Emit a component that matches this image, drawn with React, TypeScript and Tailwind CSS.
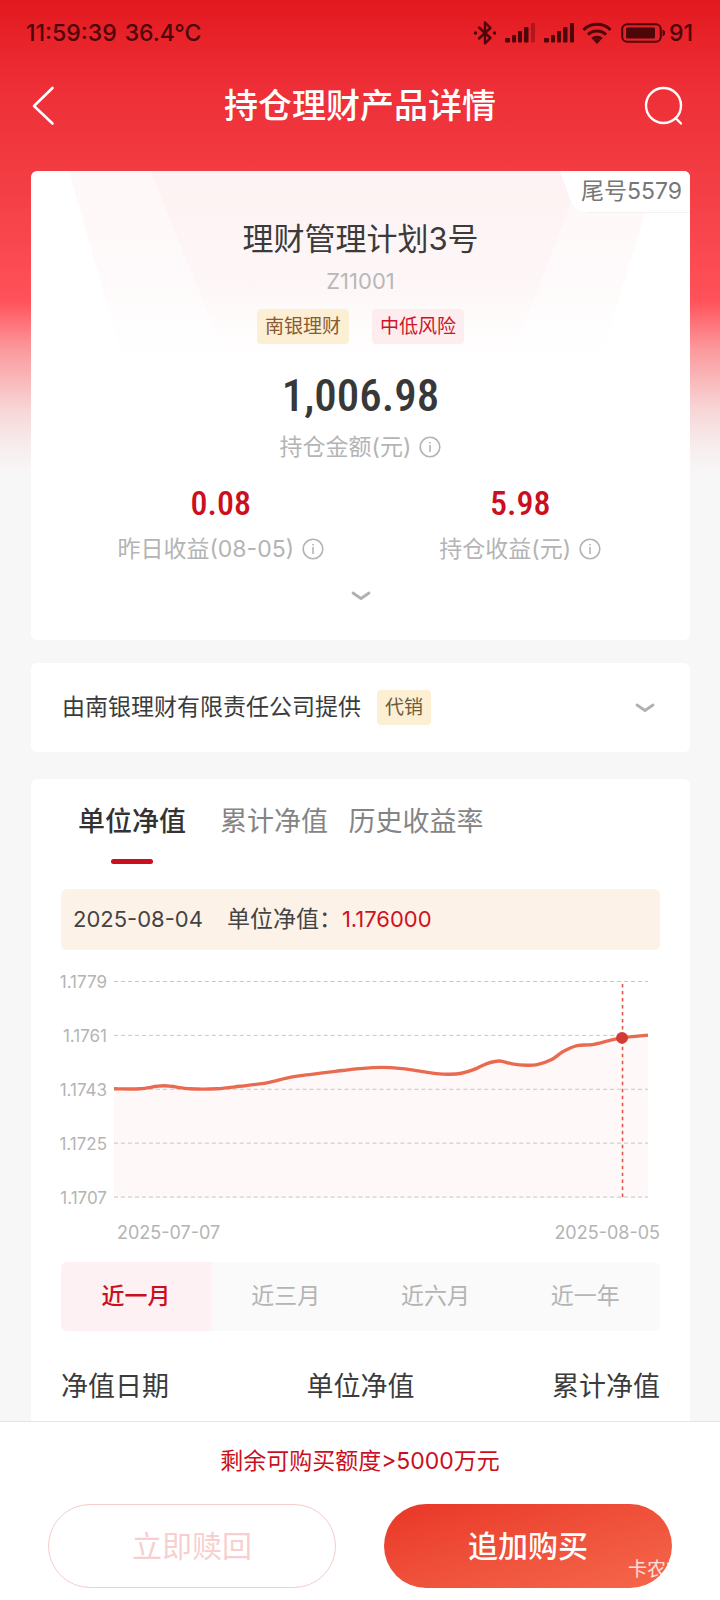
import { useState } from 'react';

const tabs = ['单位净值', '累计净值', '历史收益率'];
const periods = ['近一月', '近三月', '近六月', '近一年'];
const axisLabels = ['1.1779', '1.1761', '1.1743', '1.1725', '1.1707'];
const gridLines = [1, 55, 109, 163, 217];

// x / y of the net value curve inside the 536 x 218 plot
const points = [
  [0, 108], [26, 108], [50, 105], [76, 108], [103, 108], [126, 105.5], [153, 102],
  [176, 96.5], [196, 93.8], [222, 90.5], [246, 87.8], [268, 86.5], [289, 87.8], [309, 90.8],
  [323, 92.8], [336, 93.4], [348, 92.4], [361, 88.5], [373, 83], [386, 80.2], [399, 83],
  [413, 84.4], [424, 83.8], [438, 79], [450, 70.7], [464, 64.8], [479, 63.8], [496, 59.8],
  [509, 57], [535, 54.2],
];

function smoothPath(pts: number[][]) {
  let d = `M${pts[0][0]} ${pts[0][1]}`;
  for (let i = 0; i < pts.length - 1; i++) {
    const p0 = pts[i - 1] || pts[i];
    const p1 = pts[i];
    const p2 = pts[i + 1];
    const p3 = pts[i + 2] || p2;
    d += ` C${p1[0] + (p2[0] - p0[0]) / 6} ${p1[1] + (p2[1] - p0[1]) / 6}`;
    d += ` ${p2[0] - (p3[0] - p1[0]) / 6} ${p2[1] - (p3[1] - p1[1]) / 6} ${p2[0]} ${p2[1]}`;
  }
  return d;
}

function SignalIcon({ weak }: { weak?: boolean }) {
  return (
    <svg width="31" height="20" viewBox="0 0 31 20" fill="currentColor">
      <rect x="0" y="15" width="5" height="4.500" rx="1" />
      <rect x="7" y="12" width="4" height="7.500" rx="1" />
      <rect x="13" y="8" width="4" height="11.500" rx="1" />
      <rect x="19" y="4" width="4.500" height="15.500" rx="1" />
      <rect x="26" y="0" width="4" height="19.500" rx="1" opacity={weak ? 0.35 : 1} />
    </svg>
  );
}

function StatusBar() {
  return (
    <div className="flex h-[66px] items-center justify-between pl-[26px] pr-[27px] text-[#4d060a]">
      <div className="flex gap-2 text-[23px] font-medium">
        <span>11:59:39</span>
        <span>36.4°C</span>
      </div>
      <div className="flex items-center">
        <svg width="24" height="26" viewBox="0 0 24 26" fill="none" stroke="currentColor" strokeWidth="2.400" strokeLinejoin="round" strokeLinecap="round">
          <path d="M6 7.500 17.500 18 12 23.500V2.500L17.500 8 6 18.500" />
          <circle cx="2.500" cy="13" r="1" fill="currentColor" strokeWidth="1.400" />
          <circle cx="21.500" cy="13" r="1" fill="currentColor" strokeWidth="1.400" />
        </svg>
        <div className="ml-2 flex gap-2">
          <SignalIcon weak />
          <SignalIcon />
        </div>
        <svg className="ml-[7px]" width="30" height="22" viewBox="0 0 30 22" fill="none" stroke="currentColor" strokeWidth="3">
          <path d="M1.500 7.800a19.500 19.500 0 0 1 27 0" />
          <path d="M6 12.700a13 13 0 0 1 18 0" />
          <path d="M10.300 17a7 7 0 0 1 9.400 0" />
          <path d="M11.500 18.200 15 22l3.500-3.800a5.500 5.500 0 0 0-7 0z" fill="currentColor" stroke="none" />
        </svg>
        <svg className="ml-[9px]" width="45" height="20" viewBox="0 0 45 20" fill="none">
          <rect x="1.200" y="1.200" width="38.600" height="17.600" rx="5" stroke="currentColor" strokeWidth="2" />
          <rect x="5" y="4.500" width="29" height="11" rx="1.500" fill="currentColor" />
          <path d="M42 7c2 .5 2 5.500 0 6z" fill="currentColor" stroke="currentColor" />
        </svg>
        <span className="ml-[3px] text-[23px] font-medium">91</span>
      </div>
    </div>
  );
}

function InfoButton({ label }: { label: string }) {
  return (
    <button type="button" aria-label={label}>
      <svg width="22" height="22" viewBox="0 0 22 22" fill="none" stroke="#b4b4b4" strokeWidth="1.600">
        <circle cx="11" cy="11" r="9.800" />
        <path d="M11 9v7M11 6v1.600" />
      </svg>
    </button>
  );
}

function Chevron() {
  return (
    <svg width="20" height="10" viewBox="0 0 20 10" fill="none" stroke="#b0b0b0" strokeWidth="2.800" strokeLinecap="round" strokeLinejoin="round">
      <path d="M2 2l8 5.500L18 2" />
    </svg>
  );
}

function SummaryCard() {
  return (
    <section className="relative overflow-hidden rounded-md bg-white px-[30px] pt-[45px] text-center">
      <svg className="absolute left-0 top-0 h-[190px] w-full" viewBox="0 0 658 190" preserveAspectRatio="none">
        <defs>
          <linearGradient id="fade" x1="0" y1="0" x2="0" y2="1">
            <stop offset="0" stopColor="#fce6e8" stopOpacity="0.3" />
            <stop offset="0.600" stopColor="#fce6e8" stopOpacity="0.2" />
            <stop offset="1" stopColor="#fdeeee" stopOpacity="0" />
          </linearGradient>
        </defs>
        <path d="M38 0H626L568 190H92z" fill="url(#fade)" />
        <path d="M119 0H552L478 190H196z" fill="url(#fade)" />
      </svg>
      <div className="absolute right-0 top-0 h-[41px]">
        <svg className="absolute right-0 top-0" width="130" height="42" viewBox="0 0 130 42">
          <path d="M0 0H130V41H26C16 41 12 34 9 25z" fill="#fff" />
          <path d="M26 41.500H130" stroke="#f5f1f1" />
        </svg>
        <span className="relative pr-2 text-[23px] leading-[41px] text-[#777]">尾号5579</span>
      </div>

      <div className="relative">
        <h2 className="text-[31px] leading-[46px] text-[#3b3b3b]">理财管理计划3号</h2>
        <p className="text-[22px] leading-[38px] text-[#b8b8b8]">Z11001</p>
        <div className="mt-[9px] flex justify-center gap-[23px] text-[19px] leading-[35px]">
          <span className="rounded-sm bg-[#fdefd3] px-2 text-[#8a5a34]">南银理财</span>
          <span className="rounded-sm bg-[#fdedef] px-2 text-[#cb1526]">中低风险</span>
        </div>
        <p className="mt-[27px] font-['Roboto_Condensed','Roboto',sans-serif] text-[45px] font-medium leading-[50px] text-[#383838]">
          1,006.98
        </p>
        <div className="mt-[9px] flex items-center justify-center gap-2 text-[23px] leading-[34px] text-[#b4b4b4]">
          <span>持仓金额(元)</span>
          <InfoButton label="持仓金额说明" />
        </div>
        <div className="-mr-[10px] ml-[10px] mt-[19px] grid grid-cols-2 text-[23px] text-[#b4b4b4]">
          <div>
            <p className="font-['Roboto_Condensed','Roboto',sans-serif] text-[34px] font-medium leading-[40px] text-[#cb0f20]">0.08</p>
            <div className="mt-[9px] flex items-center justify-center gap-2 leading-[34px]">
              <span>昨日收益(08-05)</span>
              <InfoButton label="昨日收益说明" />
            </div>
          </div>
          <div>
            <p className="font-['Roboto_Condensed','Roboto',sans-serif] text-[34px] font-medium leading-[40px] text-[#cb0f20]">5.98</p>
            <div className="mt-[9px] flex items-center justify-center gap-2 leading-[34px]">
              <span>持仓收益(元)</span>
              <InfoButton label="持仓收益说明" />
            </div>
          </div>
        </div>
        <button type="button" aria-label="展开" className="mx-auto flex h-[74px] items-start justify-center pt-[25px]">
          <Chevron />
        </button>
      </div>
    </section>
  );
}

function ValueChart() {
  const line = smoothPath(points);
  return (
    <div className="mt-[23px]">
      <div className="flex gap-[7px] pr-[11px]">
        <div className="-ml-[3px] flex w-[49px] flex-col justify-between text-right text-[17px] leading-[18px] text-[#b4b4b4]">
          {axisLabels.map((label) => (
            <span key={label}>{label}</span>
          ))}
        </div>
        <div className="flex-1 py-2">
          <svg className="w-full" viewBox="0 0 536 218" fill="none">
            <path d={`${line} V217 H0 z`} fill="#fef8f8" />
            {gridLines.map((y) => (
              <path key={y} d={`M0 ${y - 0.5}H535`} stroke="#c9c6c6" strokeDasharray="4 3" />
            ))}
            <path d={line} stroke="#ea6a50" strokeWidth="3.400" />
            <path d="M509.500 3V217" stroke="#dd5a4a" strokeWidth="1.600" strokeDasharray="3.500 3.500" />
            <circle cx="509" cy="57" r="6" fill="#d23c35" />
          </svg>
        </div>
      </div>
      <div className="mt-3 flex justify-between pl-[56px] text-[18px] leading-[28px] text-[#b4b4b4]">
        <span>2025-07-07</span>
        <span>2025-08-05</span>
      </div>
    </div>
  );
}

export default function App() {
  const [activeTab, setActiveTab] = useState(0);
  const [period, setPeriod] = useState(0);

  return (
    <div className="flex min-h-screen flex-col bg-[#f7f7f7] bg-[linear-gradient(180deg,#e3191f_0px,#ee2f37_90px,#f43e45_190px,#ff5159_300px,#fb9a9d_350px,#f7d6d7_410px,#f7efef_450px,#f7f7f7_475px)] font-['Inter','Noto_Sans_CJK_SC',sans-serif]">
      <StatusBar />

      <header className="flex h-[80px] items-center justify-between pl-[31px] pr-[36px]">
        <button type="button" aria-label="返回" className="w-[45px]">
          <svg width="24" height="40" viewBox="0 0 24 40" fill="none" stroke="#fff" strokeWidth="2.600" strokeLinecap="round" strokeLinejoin="round">
            <path d="M21.500 2 3 20l18.500 17.500" />
          </svg>
        </button>
        <h1 className="text-[34px] font-medium leading-[50px] text-white">持仓理财产品详情</h1>
        <button type="button" aria-label="搜索" className="flex w-10 justify-center">
          <svg width="40" height="40" viewBox="0 0 40 40" fill="none" stroke="#fff" strokeWidth="2.400" strokeLinecap="round">
            <circle cx="19.500" cy="19.500" r="17.500" />
            <path d="M31.500 32 37 37.500" />
          </svg>
        </button>
      </header>

      <main className="flex flex-1 flex-col pl-[31px] pr-[30px] pt-[25px]">
        <SummaryCard />

        <section className="mt-[23px] flex h-[89px] items-center rounded-md bg-white px-[31px]">
          <span className="text-[23px] text-[#3b3b3b]">由南银理财有限责任公司提供</span>
          <span className="ml-4 rounded-sm bg-[#fdefd3] px-2 text-[19px] leading-[35px] text-[#6b5a3c]">代销</span>
          <button type="button" aria-label="展开机构信息" className="ml-auto pr-1">
            <Chevron />
          </button>
        </section>

        <section className="mt-[27px] flex-1 rounded-t-md bg-white px-[30px] pb-2 pt-[23px]">
          <div className="flex">
            {tabs.map((tab, i) => (
              <button
                key={tab}
                type="button"
                onClick={() => setActiveTab(i)}
                className={`flex w-[142px] flex-col items-center whitespace-nowrap text-[27px] leading-[40px] ${
                  activeTab === i ? 'font-medium text-[#333]' : 'text-[#848484]'
                }`}
              >
                {tab}
                {activeTab === i && <span className="mt-[17px] h-[5px] w-[42px] rounded-full bg-[#cb0f20]" />}
              </button>
            ))}
          </div>

          <div className="mt-[25px] flex h-[61px] items-center rounded-md bg-[#fdf2e7] px-3 text-[23px] text-[#444]">
            <span className="text-[22px]">2025-08-04</span>
            <span className="ml-6">单位净值：</span>
            <span className="text-[22px] text-[#d0111f]">1.176000</span>
          </div>

          <ValueChart />

          <div className="mt-[15px] grid grid-cols-4 overflow-hidden rounded-md bg-[#fafafa]">
            {periods.map((item, i) => (
              <button
                key={item}
                type="button"
                onClick={() => setPeriod(i)}
                className={`text-[23px] leading-[69px] ${
                  period === i ? 'bg-[#fdf1f3] font-medium text-[#cb0f20]' : 'text-[#b4b4b4]'
                }`}
              >
                {item}
              </button>
            ))}
          </div>

          <table className="mt-[36px] w-full text-[27px] leading-[40px] text-[#3b3b3b]">
            <thead>
              <tr>
                <th className="w-1/3 text-left font-normal">净值日期</th>
                <th className="w-1/3 text-center font-normal">单位净值</th>
                <th className="w-1/3 text-right font-normal">累计净值</th>
              </tr>
            </thead>
          </table>
        </section>
      </main>

      <footer className="sticky bottom-0 border-t border-[#e4e4e4] bg-white px-12 pb-3 pt-5">
        <p className="text-center text-[23px] leading-[38px] text-[#cb0f20]">剩余可购买额度&gt;5000万元</p>
        <div className="mt-6 grid grid-cols-2 gap-12 text-[30px]">
          <button type="button" className="h-[84px] rounded-full border border-[#f6cccc] text-[#f7cfd0]">
            立即赎回
          </button>
          <button type="button" className="h-[84px] rounded-full bg-linear-to-br from-[#e93526] to-[#f5674c] font-medium text-white">
            追加购买
          </button>
        </div>
        <span className="absolute bottom-4 right-4 text-[19px] leading-[28px] text-white/80">卡农社区</span>
      </footer>
    </div>
  );
}
